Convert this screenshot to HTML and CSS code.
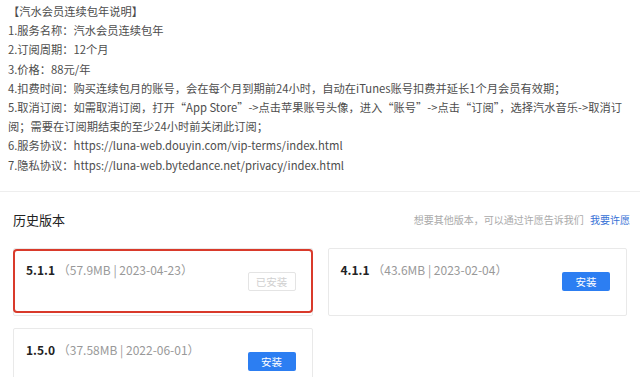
FILE: index.html
```html
<!DOCTYPE html>
<html>
<head>
    <title>汽水音乐 - 历史版本</title>
    <link rel="stylesheet" href="styles.css">
</head>
<body>
    <div class="notes">
        <div class="notes-text">
            <p>【汽水会员连续包年说明】</p>
            <p>1.服务名称：汽水会员连续包年</p>
            <p>2.订阅周期：12个月</p>
            <p>3.价格：88元/年</p>
            <p>4.扣费时间：购买连续包月的账号，会在每个月到期前24小时，自动在iTunes账号扣费并延长1个月会员有效期；</p>
            <p>5.取消订阅：如需取消订阅，打开“App Store”->点击苹果账号头像，进入“账号”->点击“订阅”，选择汽水音乐->取消订阅；需要在订阅期结束的至少24小时前关闭此订阅；</p>
            <p>6.服务协议：https://luna-web.douyin.com/vip-terms/index.html</p>
            <p>7.隐私协议：https://luna-web.bytedance.net/privacy/index.html</p>
        </div>
    </div>

    <div class="history">
        <div class="history-head">
            <h2>历史版本</h2>
            <div class="wish">想要其他版本，可以通过许愿告诉我们 <a href="#">我要许愿</a></div>
        </div>

        <div class="versions">
            <div class="version selected">
                <div class="version-name">5.1.1 <span>（57.9MB | 2023-04-23）</span></div>
                <button class="installed" disabled>已安装</button>
            </div>
            <div class="version">
                <div class="version-name">4.1.1 <span>（43.6MB | 2023-02-04）</span></div>
                <button>安装</button>
            </div>
            <div class="version">
                <div class="version-name">1.5.0 <span>（37.58MB | 2022-06-01）</span></div>
                <button>安装</button>
            </div>
        </div>
    </div>
</body>
</html>
```

FILE: styles.css
```css
body {
    margin: 0;
    font-family: "Noto Sans CJK SC", sans-serif;
    background-color: #fff;
    color: #333;
}

.notes {
    padding: 2px 8px 16px;
    border-bottom: 1px solid #eeeeee;
}

.notes-text {
    max-width: 616px;
    font-size: 11.25px;
    line-height: 19.2px;
    color: #4d4d4d;
}

.notes p {
    margin: 0;
}

.history {
    padding: 18px 13px 0;
}

.history-head {
    display: flex;
    justify-content: space-between;
    align-items: center;
    margin-right: -3px;
    margin-bottom: 18px;
}

h2 {
    margin: 0;
    font-size: 13px;
    font-weight: normal;
    line-height: 20px;
    color: #222;
}

.wish {
    font-size: 10px;
    color: #aaa;
}

.wish a {
    margin-left: 4px;
    color: #3670d6;
    text-decoration: none;
}

.versions {
    display: grid;
    grid-template-columns: 1fr 1fr;
    gap: 12px 15px;
}

.version {
    position: relative;
    height: 68px;
    box-sizing: border-box;
    padding: 0 16px 0 12px;
    border: 1px solid #e9e9e9;
    border-radius: 2px;
    display: flex;
    justify-content: space-between;
    align-items: center;
}

.version.selected::after {
    content: "";
    position: absolute;
    top: 0;
    left: -1px;
    right: -1px;
    bottom: 2px;
    border: 2px solid #d93a2b;
    border-radius: 4px;
}

.version-name {
    align-self: flex-start;
    margin-top: 13px;
    font-size: 12px;
    line-height: 16px;
    font-weight: bold;
    color: #222;
}

.version-name span {
    font-weight: normal;
    color: #999;
}

button {
    width: 48px;
    height: 19px;
    padding: 0;
    font-family: inherit;
    font-size: 10.5px;
    background-color: #2c7ef2;
    color: white;
    border: none;
    border-radius: 2px;
    cursor: pointer;
}

button.installed {
    background-color: #fff;
    color: #d0d0d0;
    border: 1px solid #e4e4e4;
    cursor: default;
}
```
